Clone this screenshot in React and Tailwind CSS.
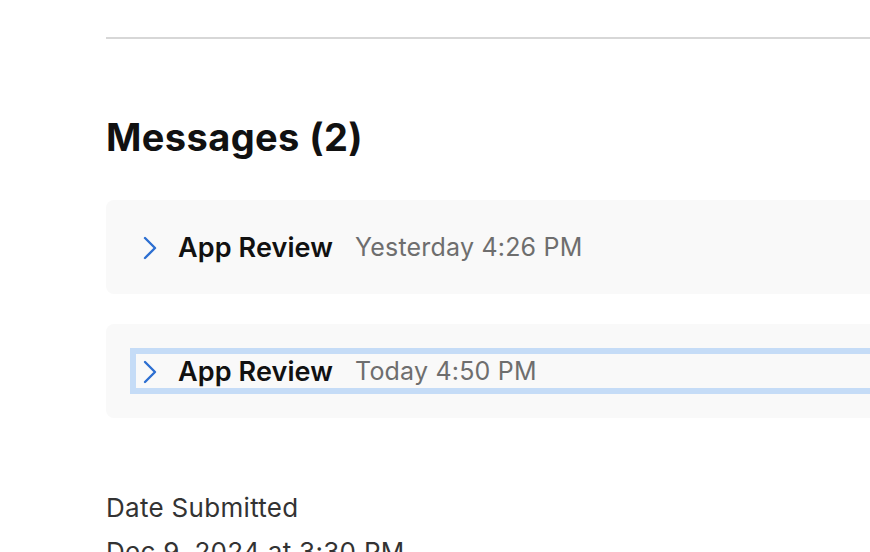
import React from "react";

const font = { fontFamily: "Inter, 'Noto Sans', 'Liberation Sans', sans-serif" };

function Chevron() {
  return (
    <svg width="16" height="24" viewBox="0 0 16 24" className="shrink-0">
      <polyline
        points="3,2 13,12 3,22"
        fill="none"
        stroke="#2d6fd1"
        strokeWidth="2.4"
        strokeLinecap="round"
        strokeLinejoin="round"
      />
    </svg>
  );
}

function MessageCard({ time, focused }) {
  return (
    <div className="bg-[#f9f9f9] rounded-lg py-6 pl-6">
      <div
        className={
          "flex items-center h-[46px] pl-[6px] pt-[2px] border-[6px] " +
          (focused ? "border-[#c5dcf7] border-r-0" : "border-transparent")
        }
      >
        <Chevron />
        <span className="ml-[20px] text-[27px] font-semibold text-[#111111] tracking-[0.1px]">
          App Review
        </span>
        <span className="ml-[22px] text-[25px] text-[#6e6e6e] tracking-[0.2px]">{time}</span>
      </div>
    </div>
  );
}

export default function App() {
  return (
    <div className="w-[870px] h-[552px] overflow-hidden bg-white" style={font}>
      <div className="w-[1000px] pl-[106px]">
        <div className="pt-[37px]">
          <div className="h-[2px] bg-[#d7d7d7]" />
        </div>
        <h2 className="mt-[76px] text-[38px] font-bold text-[#111111] leading-[44px] tracking-[0.4px]">
          Messages (2)
        </h2>
        <div className="mt-[41px] flex flex-col gap-[30px]">
          <MessageCard time="Yesterday 4:26 PM" />
          <MessageCard time="Today 4:50 PM" focused />
        </div>
        <div className="mt-[74px] text-[26px] text-[#333333] leading-[32px] tracking-[0.3px]">
          Date Submitted
        </div>
        <div className="mt-[12px] text-[26px] text-[#333333] leading-[32px] tracking-[0.3px]">
          Dec 9, 2024 at 3:30 PM
        </div>
      </div>
    </div>
  );
}
